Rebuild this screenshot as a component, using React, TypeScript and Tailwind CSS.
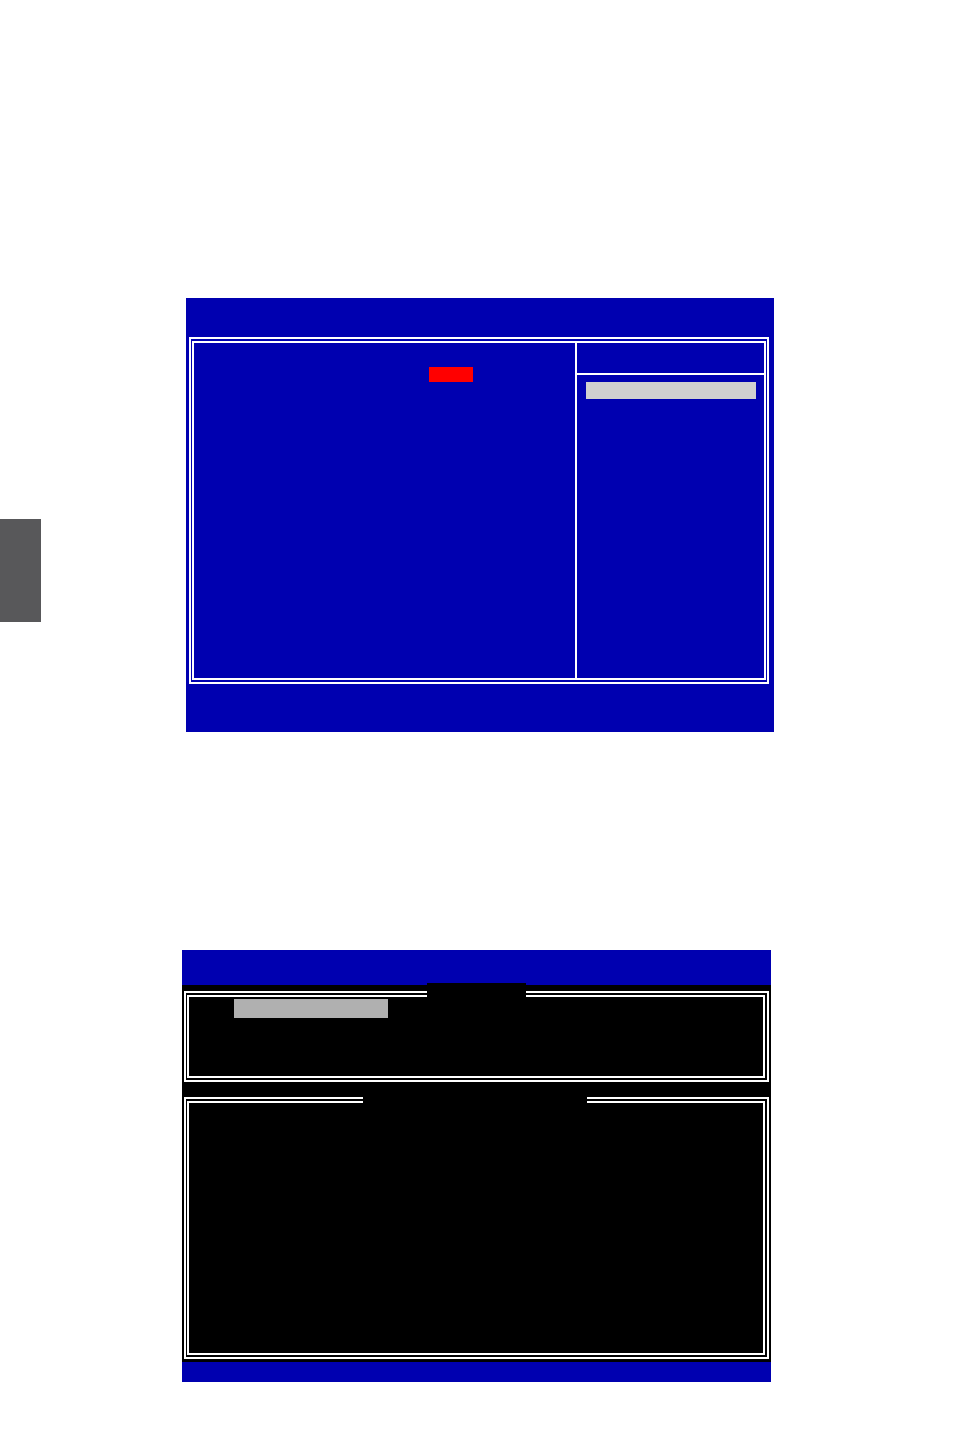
import React from "react";

// Setup screen: blue window with a two-column double frame
function SetupWindow() {
  return (
    <div className="w-[588px] h-[434px] bg-[#0000b0] pt-[39px] pl-[3px]">
      {/* outer line of the double frame */}
      <div className="w-[580px] h-[347px] border-2 border-white pt-[2px] pb-[2px] pl-[1px] pr-[1px]">
        {/* inner line of the double frame */}
        <div className="flex h-full w-full border-2 border-white">
          {/* item list column */}
          <div className="w-[383px] h-full border-r-2 border-white pt-[24px] pl-[235px]">
            <div className="w-[44px] h-[15px] bg-[#ff0000]" />
          </div>
          {/* help column */}
          <div className="flex-1 flex flex-col">
            <div className="h-[32px] border-b-2 border-white" />
            <div className="pt-[7px] pl-[9px] pr-[8px]">
              <div className="h-[17px] bg-[#d0d0d0]" />
            </div>
          </div>
        </div>
      </div>
    </div>
  );
}

// Framed box with a title gap cut into its top border
function DoubleBox({
  height,
  gapLeft,
  gapWidth,
  children,
}: {
  height: number;
  gapLeft: number;
  gapWidth: number;
  children?: React.ReactNode;
}) {
  return (
    <div
      className="relative w-[585px] border-2 border-white pl-[1px] pr-[2px] pt-[2px] pb-[2px]"
      style={{ height }}
    >
      <div className="h-full w-full border-2 border-white">{children}</div>
      <div
        className="absolute bg-black top-[-3px] h-[8px]"
        style={{ left: gapLeft, width: gapWidth }}
      />
    </div>
  );
}

// RAID utility screen: black console between blue bars
function ConsoleWindow() {
  return (
    <div className="w-[589px] h-[432px] flex flex-col">
      <div className="h-[35px] bg-[#0000b0]" />
      <div className="relative h-[377px] bg-black pl-[2px] pt-[6px]">
        {/* title tab rising into the top bar */}
        <div className="absolute left-[245px] top-[-2px] w-[99px] h-[3px] bg-black" />
        <DoubleBox height={91} gapLeft={241} gapWidth={99}>
          <div className="pl-[45px] pt-[2px]">
            <div className="w-[154px] h-[19px] bg-[#b0b0b0]" />
          </div>
        </DoubleBox>
        <div className="h-[15px]" />
        <DoubleBox height={262} gapLeft={177} gapWidth={224} />
      </div>
      <div className="h-[20px] bg-[#0000b0]" />
    </div>
  );
}

export default function App() {
  return (
    <div className="w-[954px] h-[1452px] bg-white overflow-hidden">
      <div className="flex pt-[298px]">
        {/* chapter tab on the page edge */}
        <div className="mt-[221px] w-[41px] h-[103px] bg-[#58585a]" />
        <div className="ml-[145px]">
          <SetupWindow />
        </div>
      </div>
      <div className="pt-[218px] pl-[182px]">
        <ConsoleWindow />
      </div>
    </div>
  );
}
